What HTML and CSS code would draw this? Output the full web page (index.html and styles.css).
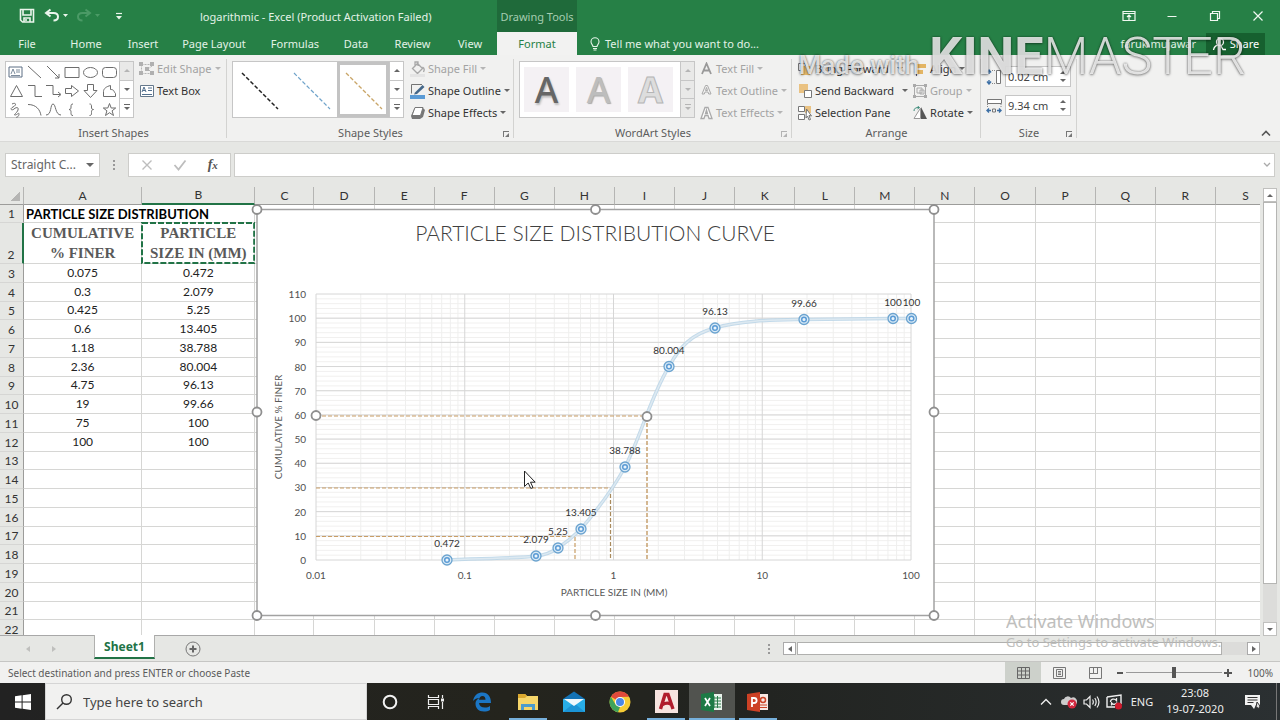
FILE: index.html
```html
<!DOCTYPE html>
<html lang="en">
<head>
<meta charset="utf-8">
<title>logarithmic - Excel</title>
<link rel="stylesheet" href="styles.css">
</head>
<body>
<div class="app">
  <header class="titlebar">
    <div class="qat">
      <button aria-label="Save"><svg width="16" height="16" viewBox="0 0 16 16"><path d="M1.5 1.5h13v12.500h-11l-2-2zM4 2v5h8V2M5 14v-4h6v4M7 11v2" fill="none" stroke="#eaf5ec" stroke-width="1.600"/></svg></button>
      <button aria-label="Undo"><svg width="24" height="16" viewBox="0 0 24 16"><path d="M6.500 1.500L2 5l4.500 3.500M2.500 5h7c6 0 6 7.500 0 7.500" fill="none" stroke="#eaf5ec" stroke-width="2"/><path d="M19 6h5l-2.500 3z" fill="#eaf5ec"/></svg></button>
      <button aria-label="Redo"><svg width="24" height="16" viewBox="0 0 24 16"><path d="M8.500 1.500L13 5 8.500 8.500M12.500 5h-7c-6 0-6 7.500 0 7.500" fill="none" stroke="#4b9a66" stroke-width="2"/><path d="M18 6h5l-2.500 3z" fill="#4b9a66"/></svg></button>
      <button aria-label="Customize Quick Access Toolbar"><svg width="8" height="9" viewBox="0 0 8 9"><path d="M1 1.500h6" stroke="#eaf5ec" stroke-width="1.200"/><path d="M1 4h6L4 7.500z" fill="#eaf5ec"/></svg></button>
    </div>
    <div class="doc-title">logarithmic - Excel (Product Activation Failed)</div>
    <div class="context-title">Drawing Tools</div>
    <div class="window-buttons">
      <button aria-label="Ribbon Display Options"><svg width="14" height="12" viewBox="0 0 14 12"><path d="M1 1.500h12v9H1zM1 3.500h12M7 10V5M5 7l2-2 2 2" fill="none" stroke="#f0f8f1" stroke-width="1.200"/></svg></button>
      <button aria-label="Minimize"><svg width="12" height="12" viewBox="0 0 12 12"><path d="M1.500 6.500h9" stroke="#f0f8f1"/></svg></button>
      <button aria-label="Restore"><svg width="12" height="12" viewBox="0 0 12 12"><path d="M1.500 3.500h7v7h-7zM3.500 3.500v-2h7v7h-2" fill="none" stroke="#f0f8f1" stroke-width="1.200"/></svg></button>
      <button aria-label="Close"><svg width="12" height="12" viewBox="0 0 12 12"><path d="M1.500 1.500l9 9M10.500 1.500l-9 9" stroke="#f0f8f1" stroke-width="1.200"/></svg></button>
    </div>
  </header>

  <nav class="tabs">
    <button>File</button><button>Home</button><button>Insert</button><button>Page Layout</button><button>Formulas</button><button>Data</button><button>Review</button><button>View</button><button class="selected">Format</button>
    <button class="tell-me"><svg width="12" height="14" viewBox="0 0 12 14"><path d="M4 9.500C4 8 2 7 2 4.800a4 4 0 0 1 8 0C10 7 8 8 8 9.500zM4 11.500h4M4.500 13h3" fill="none" stroke="#e5f3e8" stroke-width="1.100"/></svg>Tell me what you want to do...</button>
    <div class="account"><span class="user">faruk mujawar</span><button class="share"><svg width="15" height="14" viewBox="0 0 15 14"><circle cx="8" cy="5" r="3.500" fill="none" stroke="#fff" stroke-width="1.300"/><path d="M1.500 13c.5-3 2.500-4.500 4.500-5M9 9l2 3.500h3" fill="none" stroke="#fff" stroke-width="1.300"/></svg>Share</button></div>
  </nav>

  <section class="ribbon">
    <div class="group g-shapes">
      <div class="group-body">
        <div class="gallery shape-gallery">
          <svg width="113" height="56" viewBox="5 61 113 56" fill="none" stroke="#6d6d6d">
            <path d="M8 66h13v10H8z" stroke="#5c6f84"/><path d="M10 73l2-5 2 5M15 69h4M15 71h4M10 74.500h9" stroke="#5c6f84" stroke-width=".8"/>
            <path d="M27 65l13 12M46 65l12 12M58 73v4h-4M64 66.500h14v10H64z"/><ellipse cx="89.500" cy="71.500" rx="7" ry="5"/><rect x="101.500" y="66.500" width="14" height="10" rx="3"/>
            <path d="M9.500 95.500L15.500 84.500l6 11zM27 84.500h7v11h7M45 84.500h7v9h7M57 91l3 2.500-3 2.500M64.500 87.500h6v-3l7 5.500-7 5.500v-3h-6zM86.500 83.500h6v6h3.500l-6.500 7-6.500-7h3.500zM102.500 90.500c0-3 3-5 7-6v4c4 0 3 2 5 4v3h-12z"/>
            <path d="M11 103c4-2 5 1 1 3s-1 4 1 2 5-2 4 1-5 5-3 5 4-3 4-1-2 4-3 3M27 103.500c8 0 12 5 13 11M45 114c6 0 4-11 7-11s2 11 8 11"/>
            <path d="M72 103c-2 0-2 1-2 3s0 2-2 2.500c2 .5 2 1 2 3s0 3 2 3M88.500 103c2 0 2 1 2 3s0 2 2 2.500c-2 .5-2 1-2 3s0 3-2 3M108.500 102.500l1.700 4.500h4.500l-3.600 2.800 1.400 4.700-4-2.800-4 2.800 1.400-4.700-3.600-2.800h4.500z"/>
          </svg>
          <div class="scroller"><button aria-label="Up" class="off"><i class="up"></i></button><button aria-label="Down"><i class="down"></i></button><button aria-label="More shapes"><i class="down more"></i></button></div>
        </div>
        <div class="commands">
          <button class="cmd off"><svg width="16" height="14" viewBox="0 0 16 14"><path d="M2.500 2.500h10M2.500 2.500v9h9M13 4l-4 3 4 4" fill="none" stroke="#b5b5b5" stroke-dasharray="2 1"/><path d="M0 0h4v4H0zM11 0h4v4h-4zM0 9h4v4H0zM11 9h4v4h-4zM6 5h4v4H6z" fill="#b0b0b0"/></svg>Edit Shape<i class="down"></i></button>
          <button class="cmd"><svg width="16" height="14" viewBox="0 0 16 14"><path d="M1.500 1.500h13v11h-13z" fill="#fff" stroke="#65788b"/><path d="M3 8l2-5 2 5M4 6.500h2M9 4h4M9 6.500h4M3 10.500h10" fill="none" stroke="#52708e"/></svg>Text Box</button>
        </div>
      </div>
      <div class="group-label">Insert Shapes</div>
    </div>

    <div class="group g-styles">
      <div class="group-body">
        <div class="gallery line-gallery">
          <button aria-label="Dashed line, black"><svg width="52" height="54"><path d="M9 10l36 36" stroke="#222" stroke-width="1.500" stroke-dasharray="4 2"/></svg></button>
          <button aria-label="Dashed line, blue"><svg width="52" height="54"><path d="M9 10l36 36" stroke="#6fa3ca" stroke-width="1.200" stroke-dasharray="4 2"/></svg></button>
          <button aria-label="Dashed line, orange" class="chosen"><svg width="46" height="46"><path d="M6 6l36 36" stroke="#c9a567" stroke-width="1.300" stroke-dasharray="4 2"/></svg></button>
          <div class="scroller"><button aria-label="Up"><i class="up"></i></button><button aria-label="Down"><i class="down"></i></button><button aria-label="More styles"><i class="down more"></i></button></div>
        </div>
        <div class="commands">
          <button class="cmd off"><svg width="16" height="16" viewBox="0 0 16 16"><path d="M2.500 7.500l5-5 5 5-5 5zM5 5V1h3v4M12.500 6c2 1 2 3 1 5" fill="none" stroke="#a8a8a8" stroke-width="1.300"/><path d="M0 13h15v3H0z" fill="#e4e4e4"/></svg>Shape Fill<i class="down"></i></button>
          <button class="cmd"><svg width="16" height="16" viewBox="0 0 16 16"><path d="M12 1.500H1.500v9" fill="none" stroke="#737373"/><path d="M5 9.500L12.500 2l2 2L7 11l-3 .5z" fill="#45688a"/><path d="M0 12h15v4H0z" fill="#5b9bd5"/></svg>Shape Outline<i class="down"></i></button>
          <button class="cmd"><svg width="16" height="16" viewBox="0 0 16 16"><path d="M4.500 3h8.500l2 2-2 7-3 2H2l-1-3z" fill="#777"/><path d="M5 2.500h8l-2.500 8H2z" fill="#fff" stroke="#777"/></svg>Shape Effects<i class="down"></i></button>
        </div>
      </div>
      <div class="group-label">Shape Styles</div><button class="launcher" aria-label="Format Shape"></button>
    </div>

    <div class="group g-wordart">
      <div class="group-body">
        <div class="gallery art-gallery">
          <button class="art art1">A</button><button class="art art2">A</button><button class="art art3">A</button>
          <div class="scroller"><button aria-label="Up" class="off"><i class="up"></i></button><button aria-label="Down" class="off"><i class="down"></i></button><button aria-label="More WordArt" class="off"><i class="down more"></i></button></div>
        </div>
        <div class="commands">
          <button class="cmd off"><svg width="14" height="14" viewBox="0 0 14 14"><path d="M2 12L6.500 1.500 11 12M4 8.500h5" fill="none" stroke="#999" stroke-width="1.800"/></svg>Text Fill<i class="down"></i></button>
          <button class="cmd off"><svg width="14" height="14" viewBox="0 0 14 14"><path d="M2 10L5.500 1.500h2L11 10H8.700L8 8H5l-.7 2zM6.500 3.500L5.500 6.500h2z" fill="none" stroke="#aaa"/></svg>Text Outline<i class="down"></i></button>
          <button class="cmd off"><svg width="14" height="14" viewBox="0 0 14 14"><path d="M1 12.500L5 1.500h3l4 11H9l-1-3H5l-1 3zM6.500 4L5.500 7.500h2z" fill="#fff" stroke="#aaa" stroke-width="1.300"/></svg>Text Effects<i class="down"></i></button>
        </div>
      </div>
      <div class="group-label">WordArt Styles</div><button class="launcher off" aria-label="Format Text Effects"></button>
    </div>

    <div class="group g-arrange">
      <div class="group-body">
        <div class="commands">
          <button class="cmd"><svg width="16" height="14" viewBox="0 0 16 14"><path d="M1.500 1.500h7v7h-7z" fill="#fff" stroke="#777"/><path d="M4 4h9v9H4z" fill="#e8bd6d"/></svg>Bring Forward<i class="down far"></i></button>
          <button class="cmd"><svg width="16" height="14" viewBox="0 0 16 14"><path d="M2 0h9v9H2z" fill="#eac282"/><path d="M7.500 6.500h7v7h-7z" fill="#fff" stroke="#777"/></svg>Send Backward<i class="down far"></i></button>
          <button class="cmd"><svg width="16" height="16" viewBox="0 0 16 16"><path d="M1.500 1.500h6v5h-6zM1.500 9.500h6v5h-6z" fill="#fff" stroke="#777"/><path d="M8 1h6v7H8z" fill="#eac282"/><path d="M9.500 4l5 7-2.500-.5 1.500 4-1.500.5-1.500-4-1.500 2z" fill="#fff" stroke="#777"/></svg>Selection Pane</button>
        </div>
        <div class="commands">
          <button class="cmd"><svg width="16" height="14" viewBox="0 0 16 14"><path d="M4.500 0v14" stroke="#557"/><path d="M5 2h9v4H5zM5 8h6v4H5z" fill="#e3b564"/></svg>Align<i class="down"></i></button>
          <button class="cmd off"><svg width="16" height="14" viewBox="0 0 16 14"><path d="M2.500 1.500h11v11h-11zM5 4h5v5H5zM8 6h4v4H8z" fill="none" stroke="#aaa"/><path d="M1 0h3v3H1zM12 0h3v3h-3zM1 11h3v3H1zM12 11h3v3h-3z" fill="#aaa"/></svg>Group<i class="down"></i></button>
          <button class="cmd"><svg width="16" height="14" viewBox="0 0 16 14"><path d="M8.500 2v10.500H2z" fill="#fff" stroke="#999"/><path d="M9 1l6 12H9z" fill="#555"/><path d="M2 5c0-3 2-3.500 5-3.500M5.500 0l2 1.500-2 1.500" fill="none" stroke="#3d8b7a"/></svg>Rotate<i class="down"></i></button>
        </div>
      </div>
      <div class="group-label">Arrange</div>
    </div>

    <div class="group g-size">
      <div class="group-body sizes">
        <div class="size-row"><svg width="16" height="16" viewBox="0 0 16 16"><path d="M10.500 1.500h4v13h-4z" fill="#fff" stroke="#777"/><path d="M3 1v4M1 3.500L3 1l2 2.500M3 15v-4M1 12.500L3 15l2-2.500" fill="none" stroke="#3c6fa5" stroke-width="1.400"/><path d="M6 1.500h4M6 14.500h4" stroke="#888" stroke-dasharray="1 1"/></svg><label class="spin"><input aria-label="Shape Height" value="0.02 cm"><span><i class="up"></i><i class="down"></i></span></label></div>
        <div class="size-row"><svg width="16" height="16" viewBox="0 0 16 16"><path d="M1.500 1.500h14v4h-14z" fill="#fff" stroke="#777"/><path d="M1 12.500h4M3 10.500l-2 2 2 2M15 12.500h-4M13 10.500l2 2-2 2" fill="none" stroke="#3c6fa5" stroke-width="1.400"/><path d="M6.500 11h3v3h-3z" fill="none" stroke="#777"/><path d="M1.500 6v3M15 6v3" stroke="#888" stroke-dasharray="1 1"/></svg><label class="spin"><input aria-label="Shape Width" value="9.34 cm"><span><i class="up"></i><i class="down"></i></span></label></div>
      </div>
      <div class="group-label">Size</div><button class="launcher" aria-label="Size and Properties"></button>
    </div>
    <button class="collapse" aria-label="Collapse the Ribbon"><svg width="10" height="7" viewBox="0 0 10 7"><path d="M1 5.500l4-4 4 4" fill="none" stroke="#555" stroke-width="1.600"/></svg></button>
  </section>

  <section class="formula-bar">
    <div class="name-box"><input aria-label="Name Box" value="Straight C..."><button aria-label="Names"><i class="down"></i></button></div>
    <span class="dots"></span>
    <div class="fx-buttons">
      <button aria-label="Cancel"><svg width="12" height="12" viewBox="0 0 12 12"><path d="M1.500 1.500l9 9M10.500 1.500l-9 9" stroke="#bdbdbd" stroke-width="1.400"/></svg></button>
      <button aria-label="Enter"><svg width="14" height="12" viewBox="0 0 14 12"><path d="M1.500 6l4 4.500 7-9" fill="none" stroke="#bdbdbd" stroke-width="1.800"/></svg></button>
      <button class="fx" aria-label="Insert Function">f<small>x</small></button>
    </div>
    <div class="formula"><input aria-label="Formula"><svg width="8" height="6" viewBox="0 0 8 6"><path d="M1 1l3 3 3-3" fill="none" stroke="#aaa" stroke-width="1.300"/></svg></div>
  </section>

  <main class="workspace">
    <div class="sheet">
      <table id="grid"></table>
      <svg id="chart" class="chart" width="690" height="422" viewBox="250 200 690 422"></svg>
    </div>
    <div class="vscroll"><button aria-label="Scroll up"><i class="up"></i></button><div class="thumb"></div><div class="track"></div><button aria-label="Scroll down"><i class="down"></i></button></div>
  </main>

  <div class="sheetbar">
    <div class="sheet-nav"><i class="left"></i><i class="right"></i></div>
    <button class="sheet-tab">Sheet1</button>
    <button class="add-sheet" aria-label="New sheet"><svg width="16" height="16" viewBox="0 0 16 16"><circle cx="8" cy="8" r="7" fill="none" stroke="#777"/><path d="M8 4.500v7M4.500 8h7" stroke="#666" stroke-width="2"/></svg></button>
    <span class="dots"></span>
    <div class="hscroll"><button aria-label="Scroll left"><i class="left"></i></button><div class="thumb"></div><div class="track"></div><button aria-label="Scroll right"><i class="right"></i></button></div>
  </div>

  <footer class="statusbar">
    <span>Select destination and press ENTER or choose Paste</span>
    <div class="views">
      <button class="active" aria-label="Normal"><svg width="13" height="12" viewBox="0 0 13 12"><path d="M.5.500h12v11H.5zM4.500 0v12M8.500 0v12M0 4h13M0 8h13" fill="none" stroke="#666"/></svg></button>
      <button aria-label="Page Layout"><svg width="13" height="12" viewBox="0 0 13 12"><path d="M.5.500h12v11H.5zM3.500 2.500h6v7h-6zM5 4.500h3M5 6h3M5 7.500h3" fill="none" stroke="#777"/></svg></button>
      <button aria-label="Page Break Preview"><svg width="13" height="12" viewBox="0 0 13 12"><path d="M.5.500h12v11H.5zM4.500 0v6.500M8.500 0v6.500M0 6.500h9" fill="none" stroke="#777"/></svg></button>
    </div>
    <div class="zoom"><button aria-label="Zoom out"><svg width="8" height="8"><path d="M1 4h6" stroke="#555" stroke-width="2"/></svg></button><input type="range" aria-label="Zoom" value="50"><button aria-label="Zoom in"><svg width="8" height="8"><path d="M0 4h8M4 0v8" stroke="#555" stroke-width="2"/></svg></button><span>100%</span></div>
  </footer>

  <div class="taskbar">
    <button class="start" aria-label="Start"><svg width="16" height="16" viewBox="0 0 16 16"><path d="M0 2.300L6.600 1.300v6.200H0zM7.600 1.200L16 0v7.500H7.600zM0 8.500h6.600v6.200L0 13.700zM7.600 8.500H16V16l-8.400-1.200z" fill="#fff"/></svg></button>
    <label class="search"><svg width="17" height="17" viewBox="0 0 17 17"><circle cx="10.500" cy="6.500" r="4.800" fill="none" stroke="#333" stroke-width="1.400"/><path d="M7 10l-6 6" stroke="#333" stroke-width="1.500"/></svg><input aria-label="Search" placeholder="Type here to search"></label>
    <div class="apps">
      <button aria-label="Cortana"><svg width="18" height="18"><circle cx="9" cy="9" r="6.300" fill="none" stroke="#f2f2f2" stroke-width="2"/></svg></button>
      <button aria-label="Task View"><svg width="18" height="16" viewBox="0 0 18 16"><path d="M1.500 1v2.500h10V1M1.500 15v-2.500h10V15M1.500 5.500h10v5h-10zM15.500 1v3M15.500 8v7" fill="none" stroke="#eee" stroke-width="1.200"/><path d="M14 4.500h3v3h-3z" fill="#eee"/></svg></button>
      <button aria-label="Edge"><svg width="20" height="20" viewBox="0 0 20 20"><path d="M1 9C2 3 6 .500 10.500.500 16 .500 19 5 19 11H7c.3 3 2.500 4.500 6 4.500 2 0 3.500-.5 5-1.500v4c-1.500 1-4 1.500-6 1.500-5.500 0-8.500-3.500-8.500-8C3.500 9 5 7 7.500 6 5 6 2.500 7 1 9zm6-1.200h6.500C13.500 5.500 12.500 4 10.500 4S7.500 5.500 7 7.800z" fill="#1b76c5"/></svg></button>
      <button class="open" aria-label="File Explorer"><svg width="20" height="18" viewBox="0 0 20 18"><path d="M0 1h7l2 2h11v14H0z" fill="#f6d66a"/><path d="M0 1h7l2 2-2 2H0z" fill="#dba92f"/><path d="M3 17v-6h14v6h-3v-3H6v3z" fill="#4c9ccd"/></svg></button>
      <button aria-label="Mail"><svg width="24" height="22" viewBox="0 0 24 22"><path d="M1 8L12 .500 23 8v13H1z" fill="#1473b5"/><path d="M1 8h22v13H1z" fill="#28aee8"/><path d="M1 21l11-9 11 9z" fill="#1b94d5"/><path d="M2 8h20l-10 7z" fill="#eff8fc"/></svg></button>
      <button aria-label="Chrome"><svg width="22" height="22" viewBox="0 0 22 22"><circle cx="11" cy="11" r="10.500" fill="#f6cc35"/><path d="M11 11L1.900 5.750A10.500 10.500 0 0 1 20.100 5.750L11 6z" fill="#e14a3b"/><path d="M1.900 5.750L6.500 13.500 11 16l-2 5.300A10.500 10.500 0 0 1 1.900 5.750z" fill="#3fa35b"/><circle cx="11" cy="11" r="5" fill="#fff"/><circle cx="11" cy="11" r="4" fill="#4a88e8"/></svg></button>
      <button class="open" aria-label="AutoCAD"><svg width="23" height="23" viewBox="0 0 23 23"><path d="M0 0h23v23H0z" fill="#f7e4e0"/><path d="M5.500 19l4.500-14.500h3L18 19M7.500 14.500c3.500-2 6-2 9 0" fill="none" stroke="#b01c2c" stroke-width="3.400"/></svg></button>
      <button class="open current" aria-label="Excel"><svg width="22" height="20" viewBox="0 0 22 20"><path d="M10 2h11v16H10z" fill="#e9f3ec"/><path d="M13 4v12M16.500 4v12M11 6h9M11 9h9M11 12h9M11 15h9" stroke="#2d7d4b"/><path d="M0 2L13 0v20L0 18z" fill="#1d7a45"/><path d="M4 6l5 8M9 6l-5 8" stroke="#fff" stroke-width="1.700"/></svg></button>
      <button class="open" aria-label="PowerPoint"><svg width="22" height="20" viewBox="0 0 22 20"><path d="M10 2h11v16H10z" fill="#f8e8e3"/><path d="M13 13h7M13 15.500h7" stroke="#cb4427" stroke-width="1.200"/><circle cx="16" cy="8" r="2.500" fill="none" stroke="#cb4427" stroke-width="1.500"/><path d="M0 2L13 0v20L0 18z" fill="#cd4125"/><path d="M5 15V6h2c3.500 0 3.500 5 0 5H5" fill="none" stroke="#fff" stroke-width="1.800"/></svg></button>
    </div>
    <div class="tray">
      <button aria-label="Show hidden icons"><svg width="12" height="8" viewBox="0 0 12 8"><path d="M1 6.500L6 1.500l5 5" fill="none" stroke="#eee" stroke-width="1.400"/></svg></button>
      <button aria-label="OneDrive"><svg width="16" height="14" viewBox="0 0 16 14"><path d="M3 10a3 3 0 0 1 0-6 4 4 0 0 1 7-1 4 4 0 0 1 4 7z" fill="#ccc"/><circle cx="11" cy="9" r="4.500" fill="#d3273e"/><path d="M9.300 7.300l3.400 3.400M12.700 7.300l-3.400 3.400" stroke="#fff" stroke-width="1.200"/></svg></button>
      <button aria-label="Volume"><svg width="17" height="14" viewBox="0 0 17 14"><path d="M1 5h2.500L7 1.500v11L3.500 9H1zM9.500 4.500c1 1.500 1 3.500 0 5M11.800 3c1.700 2.500 1.700 5.500 0 8M14 1.500c2.500 3.500 2.500 7.500 0 11" fill="none" stroke="#eee" stroke-width="1.200"/></svg></button>
      <button aria-label="Updates"><svg width="17" height="16" viewBox="0 0 17 16"><path d="M1 3l14-2v9M1 3v10h8" fill="none" stroke="#eee" stroke-width="1.400"/><path d="M4.500 8c0-3 4-4 6-1.500V4M11 8.500c-1 2-4 2.500-5.500.500v2.500" fill="none" stroke="#eee" stroke-width="1.300"/><circle cx="12.500" cy="12" r="3.500" fill="#cf1b2d"/></svg></button>
      <span class="lang">ENG</span>
      <div class="clock"><span>23:08</span><span>19-07-2020</span></div>
      <button aria-label="Notifications"><svg width="16" height="16" viewBox="0 0 16 16"><path d="M0 1h15v10h-4l-2 4-3-4H0z" fill="#f2f2f2"/><path d="M2.500 3.500h10M2.500 6h10M2.500 8.500h6" stroke="#333"/><path d="M12 8l3 4-1 2.500-3-1.500z" fill="#ddd" stroke="#333"/></svg></button>
    </div>
  </div>

  <div class="activate"><p class="big">Activate Windows</p><p>Go to Settings to activate Windows.</p></div>
  <div class="brand"><span class="made">Made with</span><span class="kine">KINE<em>MASTER</em></span></div>
</div>
<script src="script.js"></script>
</body>
</html>
```

FILE: styles.css
```css
* { box-sizing: border-box; }
body { margin: 0; font: 11px "Noto Sans", sans-serif; color: #444; }
button, input { font: inherit; color: inherit; margin: 0; padding: 0; border: 0; background: none; min-width: 0; outline: 0; }
button { display: flex; align-items: center; justify-content: center; white-space: nowrap; }
svg { display: block; flex: none; }
p { margin: 0; }

.app { position: relative; height: 100vh; display: flex; flex-direction: column; overflow: hidden; background: #e6e7e4; }

/* small arrows */
i { display: block; flex: none; width: 0; height: 0; border: 3px solid transparent; }
i.down { border-top-color: #666; border-bottom: 0; }
i.up { border-bottom-color: #666; border-top: 0; }
i.left { border-right: 4px solid #666; border-left: 0; }
i.right { border-left: 4px solid #666; border-right: 0; }
i.more { position: relative; }
i.more::before { content: ""; position: absolute; left: -3px; top: -6px; width: 6px; height: 1px; background: #666; }
.off i.down { border-top-color: #b5b5b5; }
.off i.up { border-bottom-color: #b5b5b5; }
.off i.more::before { background: #b5b5b5; }

/* title bar */
.titlebar { flex: none; height: 32px; display: grid; grid-template-columns: 200px 297px 80px 1fr; background: #268046; color: #e3f2e6; align-items: center; }
.qat { display: flex; gap: 9px; padding-left: 19px; height: 32px; align-items: center; }
.qat button:last-child { margin-left: 5px; }
.doc-title { white-space: nowrap; }
.context-title { height: 32px; display: flex; align-items: center; justify-content: center; background: #1f6a3a; color: #a5cdb0; white-space: nowrap; }
.window-buttons { display: flex; justify-content: flex-end; padding-right: 1px; }
.window-buttons button { width: 43px; height: 28px; }

/* tabs */
.tabs { flex: none; height: 23px; display: grid; grid-template-columns: 54px 64px 50px 92px 70px 52px 61px 54px 80px 194px 1fr; background: #268046; color: #e3f2e6; }
.tabs .selected { background: #f2f2f1; color: #268046; }
.tell-me { gap: 4px; }
.account { display: flex; justify-content: flex-end; padding-right: 15px; gap: 10px; align-items: center; }
.share { background: #16602f; color: #fff; height: 22px; width: 59px; gap: 3px; }

/* ribbon */
.ribbon { flex: none; height: 87px; display: flex; background: #f1f1f0; border-bottom: 1px solid #d9d9d7; }
.group { position: relative; display: flex; flex-direction: column; }
.group::after { content: ""; position: absolute; right: 0; top: 4px; bottom: 3px; width: 1px; background: #d3d3d1; }
.g-shapes { width: 227px; }
.g-styles { width: 287px; }
.g-wordart { width: 278px; }
.g-arrange { width: 189px; }
.g-size { width: 96px; }
.group-body { height: 70px; flex: none; display: flex; padding: 6px 0 0 5px; gap: 5px; }
.group-label { text-align: center; line-height: 16px; color: #5c5c5c; }
.launcher { position: absolute; right: 5px; bottom: 4px; width: 6px; height: 6px; border-left: 1px solid #777; border-top: 1px solid #777; }
.launcher::after { content: ""; position: absolute; right: 0; bottom: 0; border: 2px solid #777; border-left-color: transparent; border-top-color: transparent; }
.launcher.off { opacity: .5; }
.gallery { display: flex; height: 57px; background: #fff; border: 1px solid #c6c6c6; }
.scroller { display: flex; flex-direction: column; width: 14px; border-left: 1px solid #c6c6c6; }
.scroller button { flex: 1; border-bottom: 1px solid #c6c6c6; }
.scroller button:last-child { border-bottom: 0; }
.scroller button.off { background: #e9e9e8; }
.line-gallery button.chosen { width: 52px; border: 3px solid #c3c3c3; }
.art-gallery { gap: 7px; padding-left: 4px; align-items: center; }
.art-gallery .scroller { align-self: stretch; }
.art { width: 45px; height: 45px; background: #f4f1f4; font: 500 36px "Noto Sans", sans-serif; }
.art1 { color: #666; text-shadow: 1px 2px 2px #bbb; }
.art2 { color: #bdbdbd; text-shadow: 1px 1px 1px #aaa; }
.art3 { color: #ddd; font-weight: 700; -webkit-text-stroke: 1px #b5b5b5; }
.commands { display: flex; flex-direction: column; margin-top: -3px; gap: 1px; }
.cmd { height: 21px; gap: 2px; justify-content: flex-start; color: #333; }
.cmd.off { color: #a3a3a3; }
.cmd i { margin-left: 1px; }
.cmd i.far { margin-left: 6px; }
.g-styles .group-body { gap: 6px; }
.g-arrange .group-body { gap: 4px; }
.sizes { flex-direction: column; gap: 8px; padding-top: 11px; }
.size-row { display: flex; align-items: center; gap: 3px; }
.spin { display: flex; align-items: center; justify-content: space-between; width: 66px; height: 21px; background: #fff; border: 1px solid #c6c6c6; padding: 0 4px 0 2px; }
.spin input { width: 48px; color: #444; }
.spin span { display: flex; flex-direction: column; gap: 5px; }
.collapse { margin-left: auto; align-self: flex-end; width: 28px; height: 15px; }

/* formula bar */
.formula-bar { flex: none; height: 45px; display: flex; align-items: center; padding: 0 5px; color: #666; }
.name-box, .fx-buttons, .formula { display: flex; align-items: center; height: 24px; background: #fff; border: 1px solid #cdcdca; }
.name-box { width: 95px; padding: 0 5px; }
.name-box input { flex: 1; font-size: 12px; }
.dots { width: 28px; height: 10px; background: radial-gradient(circle, #999 1px, transparent 1px) center / 4px 4px repeat-y; }
.name-box i { border-width: 4px; border-bottom: 0; }
.fx-buttons { width: 103px; justify-content: space-around; padding: 0 2px; }
.fx { font: italic bold 14px "Liberation Serif", serif; color: #555; align-items: baseline; }
.fx small { font-size: 11px; }
.formula { flex: 1; margin-left: 3px; padding-right: 3px; }
.formula input { flex: 1; }

/* sheet */
.workspace { flex: 1; min-height: 0; display: flex; }
.sheet { position: relative; flex: 1; min-width: 0; overflow: hidden; background: #fff; border-bottom: 1px solid #a8a8a8; }
#grid { table-layout: fixed; width: 1276px; height: 452px; border-collapse: separate; border-spacing: 0; font: 12px Lato, sans-serif; color: #222; }
#grid th, #grid td { padding: 0; border-right: 1px solid #d6d6d4; border-bottom: 1px solid #d6d6d4; text-align: center; line-height: 16px; }
#grid th { background: #e6e7e4; font-weight: 400; color: #333; }
#grid thead th { height: 18px; border-right-color: #b5b5b3; border-bottom-color: #9c9c9a; line-height: 14px; }
#grid thead th.picked { border-bottom: 2px solid #217346; }
#grid tbody th { border-right-color: #9c9c9a; vertical-align: bottom; }
#grid tbody th.picked { border-right: 2px solid #217346; }
#grid td.title { text-align: left; padding-left: 2px; font-size: 13px; font-weight: 700; color: #000; white-space: nowrap; }
#grid td.head { position: relative; font: bold 15px "Liberation Serif", serif; line-height: 20px; color: #595959; }
#grid .corner div { width: 10px; height: 10px; margin: 0 3px 0 auto; background: linear-gradient(135deg, transparent 50%, #b5b5b3 50%); }
#grid .row1 { height: 18px; }
#grid .row2 { height: 41px; }
.ants { position: absolute; left: -1px; top: -1px; width: calc(100% + 2px); height: calc(100% + 2px); }
.chart { position: absolute; left: 250px; top: 13px; font-family: Lato, sans-serif; font-size: 10px; }
.vscroll { width: 20px; flex: none; display: flex; flex-direction: column; padding: 1px 3px 0; background: #e6e7e4; }
.vscroll button { height: 14px; background: #fff; border: 1px solid #c0c0be; }
.vscroll .thumb { flex: 10; background: #fff; border: 1px solid #b5b5b3; }
.vscroll .track { flex: 1; background: #dcdcda; }

/* sheet tabs */
.sheetbar { flex: none; height: 26px; display: flex; align-items: center; border-bottom: 1px solid #c6c6c4; }
.sheet-nav { width: 94px; display: flex; gap: 22px; justify-content: flex-start; padding-left: 26px; opacity: .3; }
.sheet-tab { width: 61px; height: 24px; align-self: flex-start; margin-top: -1px; background: #fff; border: 1px solid #b0b0ae; border-top: 0; border-bottom: 2px solid #217346; color: #217346; font-weight: 700; font-size: 12px; position: relative; }
.add-sheet { margin-left: 30px; }
.sheetbar .dots { margin-left: auto; }
.hscroll { width: 477px; height: 13px; display: flex; margin-right: 20px; }
.hscroll button { width: 13px; background: #fff; border: 1px solid #aaa; }
.hscroll .thumb { flex: 17; background: #fff; border: 1px solid #b0b0ae; margin-left: 1px; }
.hscroll .track { flex: 1; background: #dcdcda; }

/* status bar */
.statusbar { flex: none; height: 21px; display: flex; align-items: center; padding-left: 8px; background: #f1f1f0; font-size: 10px; line-height: 12px; color: #5a5a5a; }
.views { margin-left: auto; display: flex; align-self: stretch; }
.views button { width: 36px; }
.views .active { background: #cdd1cb; }
.zoom { display: flex; align-items: center; padding: 0 7px 0 3px; gap: 2px; }
.zoom span { width: 39px; text-align: right; }
.zoom input { -webkit-appearance: none; appearance: none; width: 96px; height: 12px; background: linear-gradient(#999, #999) center / 100% 1px no-repeat; }
.zoom input::-webkit-slider-thumb { -webkit-appearance: none; width: 4px; height: 11px; background: #555; }

/* taskbar */
.taskbar { flex: none; height: 37px; display: flex; background: linear-gradient(90deg, #222 0, #24241d 40%, #222421 60%, #2b3032 100%); color: #eee; }
.start { width: 45px; }
.search { width: 322px; display: flex; align-items: center; gap: 10px; padding-left: 10px; background: #f1f1f0; border: 1px solid #d5d5d5; color: #444; }
.search input { flex: 1; font-size: 13px; }
.search input::placeholder { color: #444; opacity: 1; }
.apps { display: flex; }
.apps button { width: 46px; position: relative; }
.apps .open::after { content: ""; position: absolute; left: 4px; right: 4px; bottom: 0; height: 2px; background: #76b0dc; }
.apps .current { background: #51534f; }
.apps .current::after { left: 0; right: 0; }
.tray { margin-left: auto; display: flex; align-items: center; padding-right: 3px; }
.tray button { width: 23px; height: 37px; }
.lang { width: 32px; text-align: center; }
.clock { width: 74px; display: flex; flex-direction: column; align-items: center; line-height: 16px; padding-bottom: 2px; }
.tray button:last-child { width: 45px; padding-right: 3px; border-right: 1px solid #777; }

/* overlays */
.activate { position: absolute; right: 55px; bottom: 68px; color: #b9b9b7; font-size: 13px; line-height: 19px; opacity: .9; white-space: nowrap; width: 219px; }
.activate .big { font-size: 18px; line-height: 24px; }
.brand { position: absolute; right: 34px; top: 28px; display: flex; align-items: baseline; gap: 10px; color: rgba(255,255,255,.8); white-space: nowrap; font-family: Roboto, sans-serif; text-shadow: 0 0 2px rgba(0,0,0,.55), 0 1px 3px rgba(0,0,0,.35); pointer-events: none; }
.made { font-size: 26px; font-weight: 500; }
.kine { font-size: 52px; line-height: 58px; font-weight: 700; }
.kine em { font-style: normal; font-weight: 300; }
```

FILE: script.js
```js
const data = [
  ["0.075", "0.472"], ["0.3", "2.079"], ["0.425", "5.25"], ["0.6", "13.405"], ["1.18", "38.788"],
  ["2.36", "80.004"], ["4.75", "96.13"], ["19", "99.66"], ["75", "100"], ["100", "100"]
];
const letters = "ABCDEFGHIJKLMNOPQRS".split("");
const empty = n => "<td></td>".repeat(n);
const ants = '<svg class="ants"><rect x="1" y="1" style="width:calc(100% - 2px);height:calc(100% - 2px)" fill="none" stroke="#217346" stroke-width="2" stroke-dasharray="6 2"/></svg>';

let html = '<colgroup><col style="width:24px"><col style="width:118px"><col style="width:113px"><col style="width:59px">' + '<col style="width:60px">'.repeat(16) + "</colgroup>";
html += '<thead><tr><th class="corner"><div></div></th>' + letters.map(l => `<th${l === "B" ? ' class="picked"' : ""}>${l}</th>`).join("") + "</tr></thead><tbody>";
html += '<tr class="row1"><th>1</th><td class="title" colspan="2">PARTICLE SIZE DISTRIBUTION</td>' + empty(17) + "</tr>";
html += '<tr class="row2"><th class="picked">2</th><td class="head">CUMULATIVE<br>% FINER</td><td class="head">PARTICLE<br>SIZE IN (MM)' + ants + "</td>" + empty(17) + "</tr>";
for (let r = 3; r <= 22; r++) {
  const row = data[r - 3] || ["", ""];
  html += `<tr><th>${r}</th><td>${row[0]}</td><td>${row[1]}</td>${empty(17)}</tr>`;
}
document.getElementById("grid").innerHTML = html + "</tbody>";

/* chart */
const left = 316, right = 911, top0 = 294, bottom = 560;
const decade = (right - left) / 4;
const yOf = v => bottom - v * (bottom - top0) / 110;
const line = (x1, y1, x2, y2, c, extra = "") => `<path d="M${x1} ${y1}L${x2} ${y2}" stroke="${c}" ${extra}/>`;
const text = (x, y, t, c = "#595959", extra = "") => `<text x="${x}" y="${y}" fill="${c}" text-anchor="middle" ${extra}>${t}</text>`;
const knob = (x, y) => `<circle cx="${x}" cy="${y}" r="4.5" fill="#fff" stroke="#8f8f8f" stroke-width="1.8"/>`;
let s = '<rect x="257" y="209.500" width="677" height="406" fill="#fff" stroke="#a2a2a2" stroke-width="1.500"/>';
for (let v = 2; v < 110; v += 2) s += line(left, yOf(v), right, yOf(v), "#f1f0ef");
for (let d = 0; d < 4; d++) for (let k = 2; k < 10; k++) {
  const x = left + decade * (d + Math.log10(k));
  s += line(x, top0, x, bottom, "#efefee");
}
for (let v = 0; v <= 110; v += 10) {
  s += line(left, yOf(v), right, yOf(v), "#d6d6d6");
  s += `<text x="306" y="${yOf(v) + 4}" fill="#505050" text-anchor="end">${v}</text>`;
}
["0.01", "0.1", "1", "10", "100"].forEach((t, i) => {
  s += line(left + decade * i, top0, left + decade * i, bottom, "#d6d6d6") + text(left + decade * i, 579, t, "#505050");
});
s += text(595, 241, "PARTICLE SIZE DISTRIBUTION CURVE", "#404040", 'font-size="21" font-weight="300"');
s += text(614, 596, "PARTICLE SIZE IN (MM)");
s += text(0, 0, "CUMULATIVE % FINER", "#595959", 'transform="translate(282 427) rotate(-90)"');
const dash = 'stroke-dasharray="4 2" stroke-width="1.2"';
s += line(316, 416, 647, 416, "#c99e66", dash) + line(316, 488, 610, 488, "#c99e66", dash) + line(316, 536.5, 575, 536.5, "#c99e66", dash);
s += line(647, 417, 647, 560, "#b98a4c", dash) + line(610.5, 488, 610.5, 560, "#a98a5c", dash) + line(575, 537, 575, 560, "#c99e66", dash);
const curve = "M447 560L470 559C510 558 525 557.5 536 556C545 555 551 553 558 548C567 542 573 537 581 529C598 509 613 489 625 467C641 436 650 398 669 366.5C680 346 692 334 715 328C740 320 775 320 804 319.5L893 318.5L912 318.5";
s += `<path d="${curve}" fill="none" stroke="#b9d3e6" stroke-width="3.500" opacity=".85"/><path d="${curve}" fill="none" stroke="#dde9f1" stroke-width="1.500"/>`;
const points = [[447, 560, 547], [536, 556, 543], [558, 548, 535], [581, 529, 516], [625, 467, 454], [669, 366.5, 354], [715, 328, 315], [804, 319.5, 307], [893, 318.5, 306], [911.5, 318.5, 306]];
points.forEach(([x, y, ty], i) => {
  s += `<circle cx="${x}" cy="${y}" r="5" fill="#d9eaf6" stroke="#6ba3cf" stroke-width="1.300"/><circle cx="${x}" cy="${y}" r="2.300" fill="#eaf4fb" stroke="#5b9bd5" stroke-width="1.500"/>` + text(x, ty, data[i][1], "#333");
});
s += knob(316, 415.5) + knob(647, 416.5);
[[257, 209.5], [595.5, 209.5], [934, 209.5], [257, 412], [934, 412], [257, 615.5], [595.5, 615.5], [934, 615.5]].forEach(p => { s += knob(...p); });
s += '<path d="M524.500 471v15.500l3.700-3.500 2.600 5.500 2.200-1-2.500-5.300h4.700z" fill="#fff" stroke="#222"/>';
document.getElementById("chart").innerHTML = s;
```
